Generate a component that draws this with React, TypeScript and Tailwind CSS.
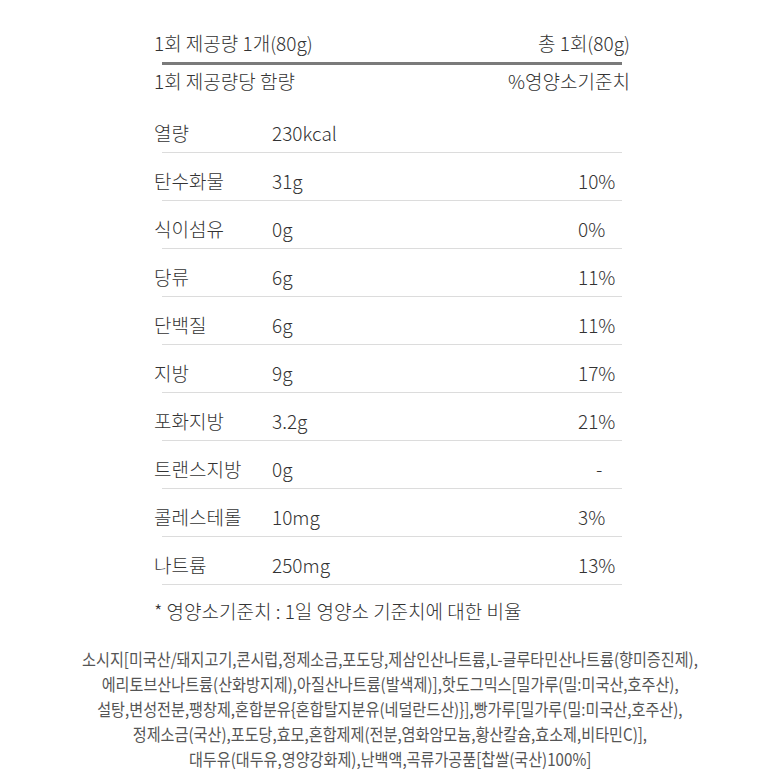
import React from "react";

const rows: [string, string, string][] = [
  ["열량", "230kcal", ""],
  ["탄수화물", "31g", "10%"],
  ["식이섬유", "0g", "0%"],
  ["당류", "6g", "11%"],
  ["단백질", "6g", "11%"],
  ["지방", "9g", "17%"],
  ["포화지방", "3.2g", "21%"],
  ["트랜스지방", "0g", "-"],
  ["콜레스테롤", "10mg", "3%"],
  ["나트륨", "250mg", "13%"],
];

const ingredients = [
  "소시지[미국산/돼지고기,콘시럽,정제소금,포도당,제삼인산나트륨,L-글루타민산나트륨(향미증진제),",
  "에리토브산나트륨(산화방지제),아질산나트륨(발색제)],핫도그믹스[밀가루(밀:미국산,호주산),",
  "설탕,변성전분,팽창제,혼합분유{혼합탈지분유(네덜란드산)}],빵가루[밀가루(밀:미국산,호주산),",
  "정제소금(국산),포도당,효모,혼합제제(전분,염화암모늄,황산칼슘,효소제,비타민C)],",
  "대두유(대두유,영양강화제),난백액,곡류가공품[찹쌀(국산)100%]",
];

export default function App() {
  return (
    <div
      className="w-[780px] h-[780px] bg-white overflow-hidden text-[#333]"
      style={{ fontFamily: '"Noto Sans CJK KR", "Noto Sans", sans-serif' }}
    >
      <div className="ml-[154px] w-[476px] pt-[31px] text-[19px] font-light">
        <div className="flex justify-between leading-[24px]">
          <span>1회 제공량 1개(80g)</span>
          <span>총 1회(80g)</span>
        </div>
        <div className="mt-[7px] mx-[8px] h-[3px] bg-[#7a7a7a]" />
        <div className="mt-[4px] flex justify-between leading-[24px]">
          <span>1회 제공량당 함량</span>
          <span>%영양소기준치</span>
        </div>
        <div className="mt-[12px]">
          {rows.map(([k, v, p]) => (
            <div key={k}>
              <div className="flex pt-[16px] pb-[7px] leading-[24px]">
                <span className="w-[118px]">{k}</span>
                <span className="w-[306px]">{v}</span>
                <span className={p === "-" ? "pl-[18px]" : ""}>{p}</span>
              </div>
              <div className="mx-[8px] h-px bg-[#dcdcdc]" />
            </div>
          ))}
        </div>
        <div className="mt-[14px] leading-[24px]">* 영양소기준치 : 1일 영양소 기준치에 대한 비율</div>
      </div>
      <div className="mt-[23px] flex flex-col items-center text-[#555] text-[17px] leading-[25px]">
        {ingredients.map((l) => (
          <div key={l} className="whitespace-nowrap scale-x-[0.89]">
            {l}
          </div>
        ))}
      </div>
    </div>
  );
}
